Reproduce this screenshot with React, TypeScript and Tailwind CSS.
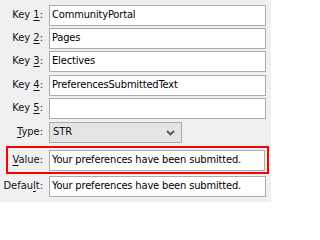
import React from "react";

const font = { fontFamily: "'DejaVu Sans Condensed', 'Liberation Sans', sans-serif" };

function Label({ text, mnemonic }: { text: string; mnemonic: number }) {
  return (
    <span>
      {text.slice(0, mnemonic)}
      <span className="underline underline-offset-2">{text[mnemonic]}</span>
      {text.slice(mnemonic + 1)}:
    </span>
  );
}

function Field({ label, mnemonic, value, className = "" }: { label: string; mnemonic: number; value: string; className?: string }) {
  return (
    <div className={`flex h-[21px] items-center ${className}`}>
      <div className="w-[49px] shrink-0 pr-[6px] text-right">
        <Label text={label} mnemonic={mnemonic} />
      </div>
      <div className="flex h-full w-[217px] items-center border border-[#ababab] bg-white px-[2px] tracking-[-0.15px] text-black">
        {value}
      </div>
    </div>
  );
}

export default function App() {
  return (
    <div className="h-[202px] w-[271px] whitespace-nowrap bg-[#f0f0f0] text-[11px] text-[#101020]" style={font}>
      <div className="flex flex-col pt-[5px]">
        <Field label="Key 1" mnemonic={4} value="CommunityPortal" />
        <Field label="Key 2" mnemonic={4} value="Pages" className="mt-[2px]" />
        <Field label="Key 3" mnemonic={4} value="Electives" className="mt-[2px]" />
        <Field label="Key 4" mnemonic={4} value="PreferencesSubmittedText" className="mt-[3px]" />
        <Field label="Key 5" mnemonic={4} value="" className="mt-[2px]" />

        {/* type dropdown */}
        <div className="mt-[3px] flex h-[21px] items-center">
          <div className="w-[49px] shrink-0 pr-[6px] text-right">
            <Label text="Type" mnemonic={0} />
          </div>
          <div className="flex h-full w-[133px] items-center justify-between border border-[#acacac] bg-[#e5e5e5] pl-[3px] pr-[6px]">
            <span>STR</span>
            <svg width="9" height="6" viewBox="0 0 9 6">
              <path d="M1 1 L4.5 4.5 L8 1" stroke="#555" strokeWidth="1.8" fill="none" />
            </svg>
          </div>
        </div>

        {/* highlighted value row */}
        <div className="ml-[6px] mt-[3px] flex h-[28px] w-[263px] items-center border-2 border-[#ff0000] py-[2px] pr-[2px]">
          <div className="w-[41px] shrink-0 pr-[6px] text-right">
            <Label text="Value" mnemonic={0} />
          </div>
          <div className="flex h-[21px] w-[217px] items-center border border-[#ababab] bg-white px-[2px] tracking-[-0.15px] text-black">
            Your preferences have been submitted.
          </div>
        </div>

        <Field label="Default" mnemonic={5} value="Your preferences have been submitted." className="mt-[2px]" />
      </div>
    </div>
  );
}
